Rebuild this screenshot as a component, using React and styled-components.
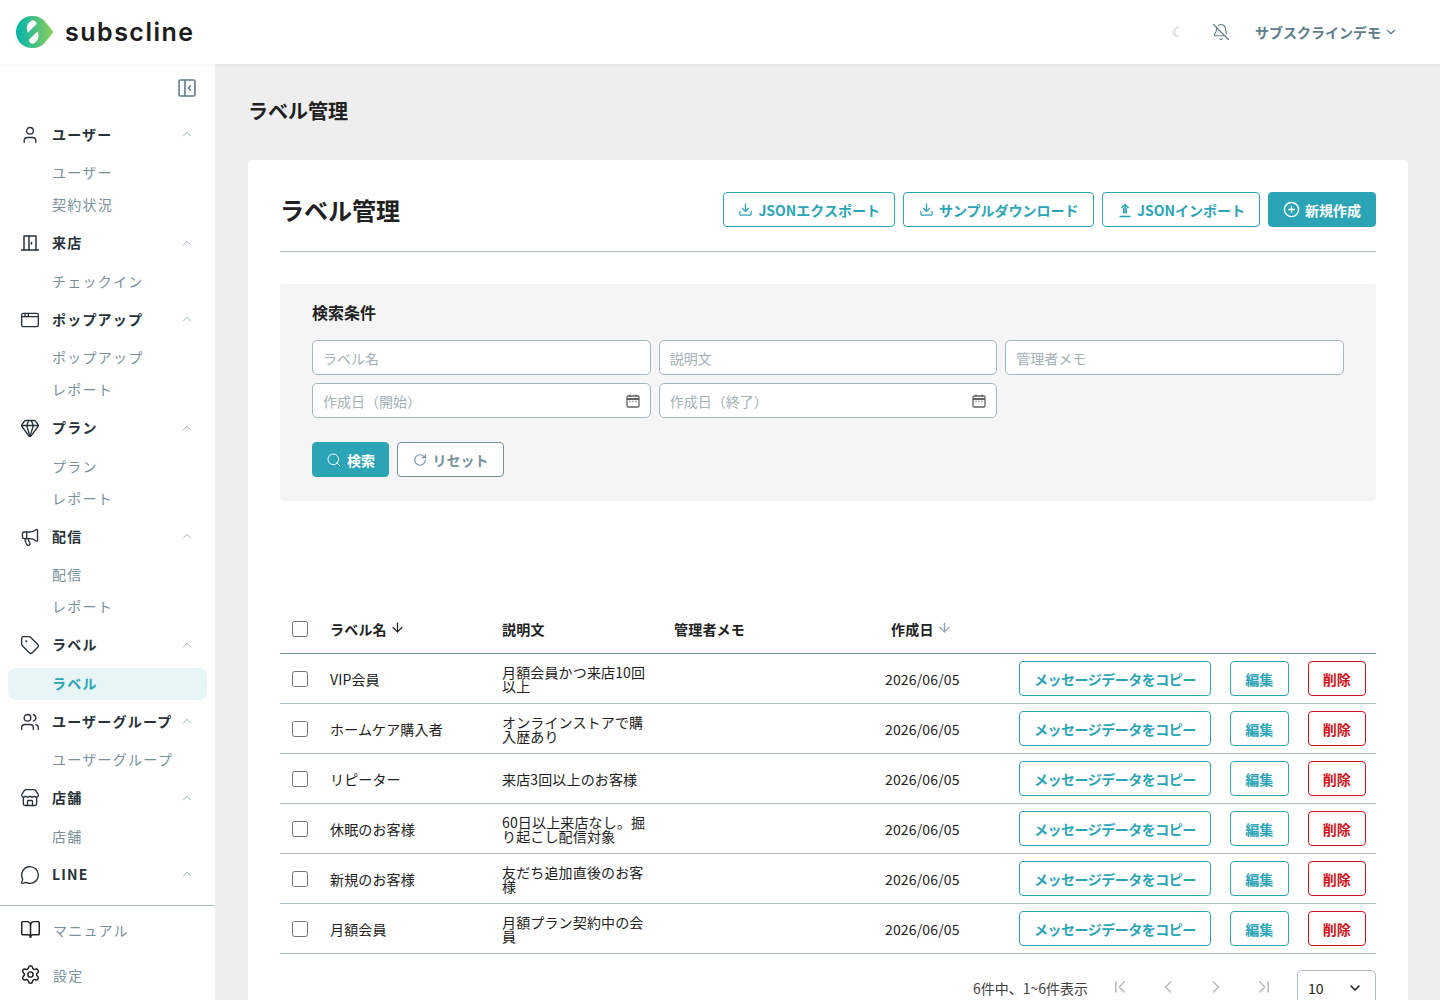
import React from "react";
import styled, { createGlobalStyle } from "styled-components";
import {
  User,
  AppWindow,
  Gem,
  Megaphone,
  Tag,
  Users,
  Store,
  MessageCircle,
  BookOpen,
  Settings,
  ChevronUp,
  ChevronDown,
  ChevronLeft,
  ChevronRight,
  ChevronFirst,
  ChevronLast,
  BellOff,
  Search,
  RotateCw,
  Download,
  CirclePlus,
  ArrowDown,
} from "lucide-react";

const TEAL = "#2ba5b6";
const FONT = '"Noto Sans CJK JP", "Noto Sans", sans-serif';

const GlobalStyle = createGlobalStyle`
  html, body {
    margin: 0;
    height: 1000px;
    overflow: hidden;
    background: #eeeeee;
    font-family: ${FONT};
    color: #212121;
  }
  * { box-sizing: border-box; }
`;

// Header
const Header = styled.header`
  height: 64px;
  background: #fff;
  display: flex;
  align-items: center;
  justify-content: space-between;
  padding: 0 42px 0 16px;
  box-shadow: 0 1px 4px rgba(0, 0, 0, 0.06);
  position: relative;
  z-index: 2;
`;

const Logo = styled.div`
  display: flex;
  align-items: center;
  gap: 11px;
`;

const LogoText = styled.span`
  font-family: "Inter", sans-serif;
  font-size: 25px;
  font-weight: 600;
  letter-spacing: 1.5px;
  color: #1c1c1c;
  line-height: 1;
`;

const HeaderTools = styled.div`
  display: flex;
  align-items: center;
  color: #607d8b;
`;

const MoonGlyph = styled.span`
  font-family: "DejaVu Sans", sans-serif;
  font-size: 14px;
  color: #b0bec5;
  margin-right: 28px;
`;

const Account = styled.span`
  display: flex;
  align-items: center;
  gap: 3px;
  margin-left: 25px;
  font-size: 14px;
  font-weight: 700;
  color: #607d8b;
`;

// Shell
const Shell = styled.div`
  display: flex;
  height: 936px;
`;

const Sidebar = styled.aside`
  width: 215px;
  flex: none;
  background: #fff;
  display: flex;
  flex-direction: column;
  overflow: hidden;
`;

const CollapseRow = styled.div`
  height: 51.5px;
  padding: 15px 19px 0 0;
  display: flex;
  justify-content: flex-end;
  align-items: flex-start;
  color: #607d8b;
`;

const Nav = styled.nav`
  flex: 1;
`;

const Group = styled.div`
  margin-bottom: 3px;
`;

const GroupHead = styled.div`
  height: 38px;
  margin-bottom: 3.5px;
  padding: 0 21px 0 20px;
  display: flex;
  align-items: center;
  color: #263238;
  font-size: 14px;
  font-weight: 700;
  letter-spacing: 1.2px;
`;

const IconSlot = styled.span`
  width: 32px;
  flex: none;
  display: flex;
  align-items: center;
  color: #263238;
`;

const GroupLabel = styled.span`
  flex: 1;
  white-space: nowrap;
  padding-bottom: 2px;
`;

const Caret = styled(ChevronUp)`
  color: #90a4ae;
  flex: none;
  margin-top: -1px;
`;

const SubItem = styled.div`
  height: 32px;
  margin: 0 8px;
  padding: 0 0 2px 44px;
  display: flex;
  align-items: center;
  font-size: 14px;
  letter-spacing: 1.25px;
  border-radius: 8px;
  font-weight: ${(p) => (p.$active ? 700 : 400)};
  color: ${(p) => (p.$active ? TEAL : "#78909c")};
  background: ${(p) => (p.$active ? "#e8f5f7" : "transparent")};
`;

const SideFooter = styled.div`
  border-top: 1px solid #b0bec5;
  height: 95px;
  padding: 1px 20px 0;
`;

const FooterItem = styled.div`
  height: 45px;
  display: flex;
  align-items: center;
  font-size: 14px;
  letter-spacing: 1.25px;
  color: #78909c;
`;

const FooterIcon = styled.span`
  width: 33px;
  display: flex;
  color: #212121;
`;

// Main
const Main = styled.main`
  flex: 1;
  padding: 32px 32px 0 33px;
  overflow: hidden;
`;

const PageTitle = styled.h1`
  margin: 0 0 34px;
  font-size: 20px;
  line-height: 29px;
  font-weight: 700;
  color: #212121;
  height: 30px;
`;

const Card = styled.section`
  background: #fff;
  border-radius: 4px;
  padding: 32px;
  height: 900px;
`;

const CardHead = styled.div`
  display: flex;
  align-items: center;
  justify-content: space-between;
  height: 60px;
  padding-bottom: 25px;
  border-bottom: 1px solid #b0bec5;
  margin-bottom: 32px;
`;

const CardTitle = styled.h2`
  margin: 2px 0 0;
  font-size: 24px;
  line-height: 36px;
  font-weight: 700;
`;

const HeadActions = styled.div`
  display: flex;
  gap: 8px;
`;

const Button = styled.button`
  height: 35px;
  display: inline-flex;
  align-items: center;
  justify-content: center;
  gap: ${(p) => p.$gap || 5}px;
  padding: ${(p) => p.$pad || "0 14px"};
  padding-top: ${(p) => (p.$flat ? 0 : 1)}px;
  border-radius: 4px;
  font-family: ${FONT};
  font-size: 14px;
  font-weight: 700;
  white-space: nowrap;
  letter-spacing: ${(p) => p.$spacing || 0}px;
  border: 1px solid ${(p) => (p.$tone === "danger" ? "#d0121b" : p.$tone === "muted" ? "#78909c" : TEAL)};
  color: ${(p) => (p.$solid ? "#fff" : p.$tone === "danger" ? "#d0121b" : p.$tone === "muted" ? "#78909c" : TEAL)};
  background: ${(p) => (p.$solid ? TEAL : "#fff")};
`;

const SearchPanel = styled.section`
  background: #f5f5f5;
  border-radius: 4px;
  padding: 16px 32px 24px;
  height: 217px;
`;

const SearchTitle = styled.h3`
  margin: 0 0 15px;
  font-size: 16px;
  line-height: 25px;
  font-weight: 700;
`;

const FieldGrid = styled.div`
  display: grid;
  grid-template-columns: repeat(3, 1fr);
  gap: 8px;
`;

const Field = styled.div`
  height: 35px;
  padding: 0 10px;
  display: flex;
  align-items: center;
  justify-content: space-between;
  background: #fff;
  border: 1px solid #a5b6bd;
  border-radius: 5px;
  font-size: 14px;
  color: #a3b0b6;
`;

const SearchActions = styled.div`
  display: flex;
  gap: 8px;
  margin-top: 24px;
`;

const TableWrap = styled.div`
  margin-top: 103px;
`;

const Table = styled.table`
  width: 100%;
  border-collapse: collapse;
  table-layout: fixed;
  font-size: 14px;
`;

const Th = styled.th`
  height: 49px;
  padding: 2px 0 0 ${(p) => p.$pl || 0}px;
  text-align: left;
  font-weight: 700;
  font-size: 14px;
  letter-spacing: 0.2px;
  white-space: nowrap;
  border-bottom: 1px solid #78909c;
`;

const SortArrow = styled(ArrowDown)`
  vertical-align: 0;
  margin-left: 3px;
  color: ${(p) => (p.$dim ? "#90a4ae" : "#212121")};
`;

const Td = styled.td`
  height: 50px;
  padding: ${(p) => (p.$flush ? "0" : "2px 0 0")};
  border-bottom: 1px solid #b0bec5;
  vertical-align: middle;
  letter-spacing: 0.15px;
`;

const Desc = styled.div`
  width: 147px;
  line-height: 14px;
`;

const Check = styled.span`
  display: block;
  width: 16px;
  height: 16px;
  margin-left: 12px;
  background: #fff;
  border: 1px solid #757575;
  border-radius: 2.5px;
`;

const RowActions = styled.div`
  display: flex;
  align-items: center;
  gap: 19px;
`;

const Pager = styled.div`
  display: flex;
  align-items: flex-start;
  justify-content: flex-end;
  margin-top: 16px;
  font-size: 14px;
  color: #424242;
`;

const PagerText = styled.span`
  margin: 8px 22px 0 0;
`;

const PagerIcons = styled.div`
  display: flex;
  gap: 28px;
  margin: 7px 23px 0 0;
  color: #bdbdbd;
`;

const PageSize = styled.div`
  width: 79px;
  height: 36px;
  padding: 0 12px 0 10px;
  display: flex;
  align-items: center;
  justify-content: space-between;
  border: 1px solid #b0bec5;
  border-radius: 5px;
  color: #212121;
`;

const DoorIcon = () => (
  <svg width="20" height="20" viewBox="0 0 20 20" fill="none" stroke="currentColor" strokeWidth="1.5" strokeLinecap="round" strokeLinejoin="round">
    <path d="M1.500 17h17" />
    <path d="M4 17V3h12v14" />
    <path d="M9 3v14" />
    <path d="M11.500 9.500v1.500" />
  </svg>
);

const CollapseIcon = () => (
  <svg width="18" height="18" viewBox="0 0 18 18" fill="none" stroke="currentColor" strokeWidth="1.6" strokeLinecap="round" strokeLinejoin="round">
    <rect x="1" y="1" width="16" height="16" rx="1.5" />
    <path d="M7 1v16M12.500 7l-2 2 2 2" />
  </svg>
);

const CalendarIcon = () => (
  <svg width="14" height="14" viewBox="0 0 14 14" fill="none" stroke="#616161" strokeWidth="1.3">
    <rect x="1" y="2" width="12" height="11" rx="1.2" />
    <path d="M1 5h12" strokeWidth="2" />
    <path d="M4 .6v2.400M10 .6v2.400M3.500 7.500h1M6.500 7.500h1M9.500 7.500h1" />
  </svg>
);

const ImportIcon = () => (
  <svg width="16" height="16" viewBox="0 0 16 16" fill="none" stroke="currentColor" strokeWidth="1.500">
    <path d="M8 11V2.500M4.500 6L8 2.500 11.500 6" />
    <path d="M2.500 14.500h11" strokeWidth="1.600" />
    <path d="M6.500 6v5h3V6" strokeWidth="1" />
  </svg>
);

const LogoMark = () => (
  <svg width="38" height="32" viewBox="0 0 38 32">
    <defs>
      <linearGradient id="logoGrad" x1="0" y1="0" x2="1" y2="0">
        <stop offset="0" stopColor="#00b3ac" />
        <stop offset="1" stopColor="#8fcf5a" />
      </linearGradient>
    </defs>
    <path d="M16 0C22 0 26 2 29 5.500L37.500 16 29 26.500C26 30 22 32 16 32 7 32 0 25 0 16S7 0 16 0Z" fill="url(#logoGrad)" />
    <path d="M12 16.500L20.500 8.200A3.400 3.400 0 0 0 14.500 5.600C11 7.500 9.800 13 12 16.500Z" fill="#fff" />
    <path d="M21.500 15.500L13 23.800A3.400 3.400 0 0 0 19 26.400C22.500 24.500 23.700 19 21.500 15.500Z" fill="#fff" />
  </svg>
);

const navGroups = [
  { label: "ユーザー", icon: <User size={20} strokeWidth={1.6} />, items: ["ユーザー", "契約状況"] },
  { label: "来店", icon: <DoorIcon />, items: ["チェックイン"] },
  { label: "ポップアップ", icon: <AppWindow size={20} strokeWidth={1.6} />, items: ["ポップアップ", "レポート"] },
  { label: "プラン", icon: <Gem size={20} strokeWidth={1.6} />, items: ["プラン", "レポート"] },
  { label: "配信", icon: <Megaphone size={20} strokeWidth={1.6} />, items: ["配信", "レポート"] },
  { label: "ラベル", icon: <Tag size={20} strokeWidth={1.6} />, items: ["ラベル"], active: "ラベル" },
  { label: "ユーザーグループ", icon: <Users size={20} strokeWidth={1.6} />, items: ["ユーザーグループ"] },
  { label: "店舗", icon: <Store size={20} strokeWidth={1.6} />, items: ["店舗"] },
  { label: "LINE", icon: <MessageCircle size={20} strokeWidth={1.6} />, items: [] },
];

const rows = [
  { name: "VIP会員", desc: "月額会員かつ来店10回以上" },
  { name: "ホームケア購入者", desc: "オンラインストアで購入歴あり" },
  { name: "リピーター", desc: "来店3回以上のお客様" },
  { name: "休眠のお客様", desc: "60日以上来店なし。掘り起こし配信対象" },
  { name: "新規のお客様", desc: "友だち追加直後のお客様" },
  { name: "月額会員", desc: "月額プラン契約中の会員" },
];

export default function App() {
  return (
    <>
      <GlobalStyle />
      <Header>
        <Logo>
          <LogoMark />
          <LogoText>subscline</LogoText>
        </Logo>
        <HeaderTools>
          <MoonGlyph>☾</MoonGlyph>
          <BellOff size={18} strokeWidth={1.5} />
          <Account>
            サブスクラインデモ
            <ChevronDown size={14} />
          </Account>
        </HeaderTools>
      </Header>
      <Shell>
        <Sidebar>
          <CollapseRow>
            <CollapseIcon />
          </CollapseRow>
          <Nav>
            {navGroups.map((group) => (
              <Group key={group.label}>
                <GroupHead>
                  <IconSlot>{group.icon}</IconSlot>
                  <GroupLabel>{group.label}</GroupLabel>
                  <Caret size={14} strokeWidth={1.5} />
                </GroupHead>
                {group.items.map((item) => (
                  <SubItem key={item} $active={group.active === item}>
                    {item}
                  </SubItem>
                ))}
              </Group>
            ))}
          </Nav>
          <SideFooter>
            <FooterItem>
              <FooterIcon>
                <BookOpen size={21} strokeWidth={1.7} />
              </FooterIcon>
              マニュアル
            </FooterItem>
            <FooterItem>
              <FooterIcon>
                <Settings size={21} strokeWidth={1.7} />
              </FooterIcon>
              設定
            </FooterItem>
          </SideFooter>
        </Sidebar>
        <Main>
          <PageTitle>ラベル管理</PageTitle>
          <Card>
            <CardHead>
              <CardTitle>ラベル管理</CardTitle>
              <HeadActions>
                <Button $pad="0 14.5px">
                  <Download size={15} />
                  JSONエクスポート
                </Button>
                <Button $pad="0 14.5px">
                  <Download size={15} />
                  サンプルダウンロード
                </Button>
                <Button $pad="0 14px" $gap={4}>
                  <ImportIcon />
                  JSONインポート
                </Button>
                <Button $solid $pad="0 14px">
                  <CirclePlus size={17} />
                  新規作成
                </Button>
              </HeadActions>
            </CardHead>
            <SearchPanel>
              <SearchTitle>検索条件</SearchTitle>
              <FieldGrid>
                <Field>ラベル名</Field>
                <Field>説明文</Field>
                <Field>管理者メモ</Field>
                <Field>
                  作成日（開始）
                  <CalendarIcon />
                </Field>
                <Field>
                  作成日（終了）
                  <CalendarIcon />
                </Field>
              </FieldGrid>
              <SearchActions>
                <Button $solid $flat $pad="0 13px">
                  <Search size={16} strokeWidth={1.5} />
                  検索
                </Button>
                <Button $tone="muted" $flat $pad="0 14.5px" $gap={6}>
                  <RotateCw size={14} />
                  リセット
                </Button>
              </SearchActions>
            </SearchPanel>
            <TableWrap>
              <Table>
                <colgroup>
                  <col width="50" />
                  <col width="172" />
                  <col width="172" />
                  <col width="211" />
                  <col width="134" />
                  <col />
                </colgroup>
                <thead>
                  <tr>
                    <Th>
                      <Check />
                    </Th>
                    <Th>
                      ラベル名
                      <SortArrow size={15} />
                    </Th>
                    <Th>説明文</Th>
                    <Th>管理者メモ</Th>
                    <Th $pl={6}>
                      作成日
                      <SortArrow size={15} $dim />
                    </Th>
                    <Th />
                  </tr>
                </thead>
                <tbody>
                  {rows.map((row) => (
                    <tr key={row.name}>
                      <Td>
                        <Check />
                      </Td>
                      <Td>{row.name}</Td>
                      <Td>
                        <Desc>{row.desc}</Desc>
                      </Td>
                      <Td />
                      <Td>2026/06/05</Td>
                      <Td $flush>
                        <RowActions>
                          <Button $spacing={-0.5}>メッセージデータをコピー</Button>
                          <Button $pad="0 14.5px">編集</Button>
                          <Button $tone="danger">削除</Button>
                        </RowActions>
                      </Td>
                    </tr>
                  ))}
                </tbody>
              </Table>
              <Pager>
                <PagerText>6件中、1~6件表示</PagerText>
                <PagerIcons>
                  <ChevronFirst size={20} />
                  <ChevronLeft size={20} />
                  <ChevronRight size={20} />
                  <ChevronLast size={20} />
                </PagerIcons>
                <PageSize>
                  10
                  <ChevronDown size={16} strokeWidth={2.4} />
                </PageSize>
              </Pager>
            </TableWrap>
          </Card>
        </Main>
      </Shell>
    </>
  );
}
